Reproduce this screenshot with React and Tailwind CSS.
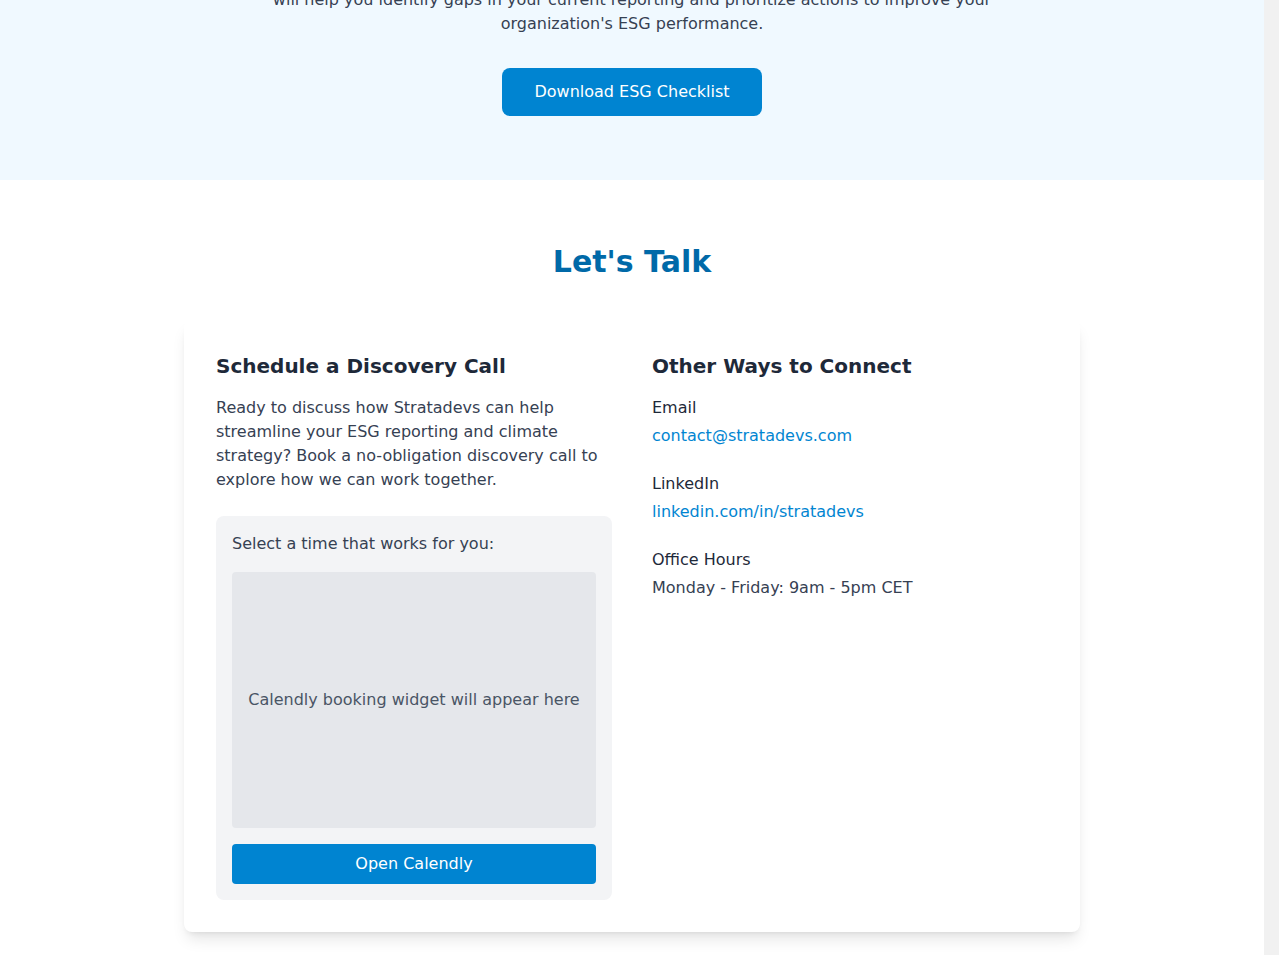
import React from "react";

const font = { fontFamily: '"DejaVu Sans", sans-serif' };

const ContactItem = ({ label, children }) => (
  <div>
    <p className="text-gray-800 mb-1">{label}</p>
    {children}
  </div>
);

export default function App() {
  return (
    <div className="h-screen overflow-y-scroll bg-[#f1f1f1] pr-[15px]" style={font}>
      <div className="bg-white h-full">
        {/* Checklist section (tail end, scrolled) */}
        <section className="bg-sky-50 pb-16 overflow-hidden">
          <div className="max-w-3xl mx-auto text-center -mt-[12px]">
            <p className="text-gray-700 mb-8">
              will help you identify gaps in your current reporting and prioritize
              actions to improve your organization's ESG performance.
            </p>
            <button className="bg-sky-600 text-white px-8 py-3 rounded-lg cursor-pointer">
              Download ESG Checklist
            </button>
          </div>
        </section>

        {/* Contact section */}
        <section className="pt-16 pb-[23px]">
          <h2 className="text-3xl font-bold text-sky-700 text-center mb-10">
            Let's Talk
          </h2>

          <div className="max-w-4xl mx-auto bg-white rounded-lg shadow-lg p-8 grid grid-cols-2 gap-10">
            <div>
              <h3 className="text-xl font-bold text-gray-800 mb-4">
                Schedule a Discovery Call
              </h3>
              <p className="text-gray-700 mb-6">
                Ready to discuss how Stratadevs can help streamline your ESG
                reporting and climate strategy? Book a no-obligation discovery
                call to explore how we can work together.
              </p>
              <div className="bg-gray-100 rounded-lg p-4">
                <p className="text-gray-700 mb-4">Select a time that works for you:</p>
                <div className="bg-gray-200 rounded h-64 flex items-center justify-center">
                  <p className="text-gray-600">Calendly booking widget will appear here</p>
                </div>
                <button className="mt-4 w-full bg-sky-600 text-white py-2 rounded cursor-pointer">
                  Open Calendly
                </button>
              </div>
            </div>

            <div>
              <h3 className="text-xl font-bold text-gray-800 mb-4">
                Other Ways to Connect
              </h3>
              <div className="space-y-6">
                <ContactItem label="Email">
                  <a href="#" className="text-sky-600">contact@stratadevs.com</a>
                </ContactItem>
                <ContactItem label="LinkedIn">
                  <a href="#" className="text-sky-600">linkedin.com/in/stratadevs</a>
                </ContactItem>
                <ContactItem label="Office Hours">
                  <p className="text-gray-700">Monday - Friday: 9am - 5pm CET</p>
                </ContactItem>
              </div>
            </div>
          </div>
        </section>
      </div>
    </div>
  );
}
